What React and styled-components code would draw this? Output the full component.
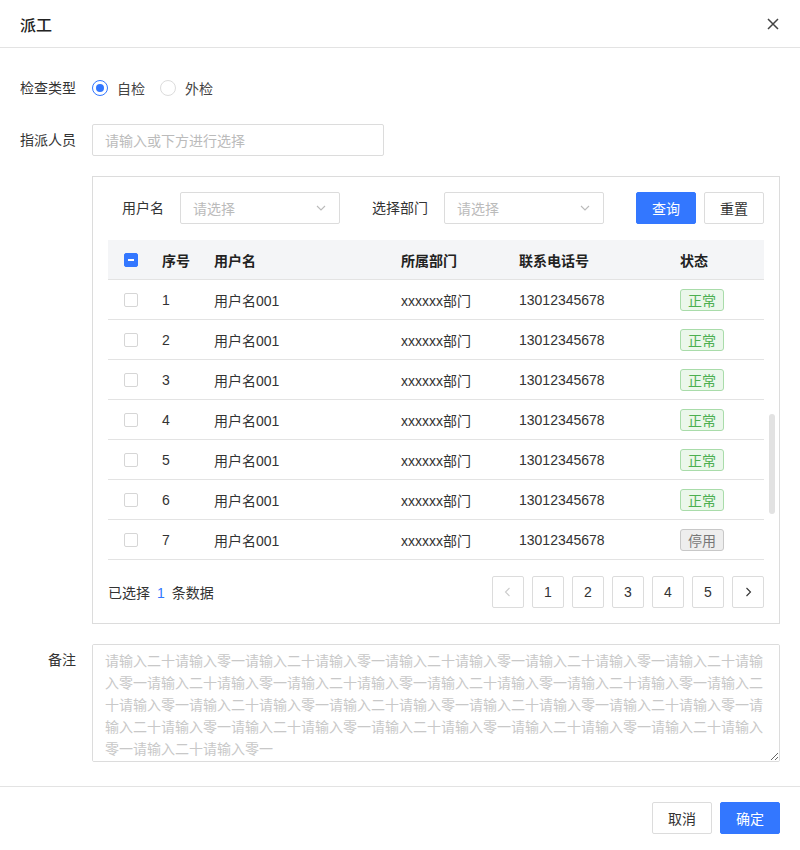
import React from "react";
import styled, { createGlobalStyle } from "styled-components";

const BLUE = "#3377ff";

const GlobalStyle = createGlobalStyle`
  * { box-sizing: border-box; }
  body {
    margin: 0;
    background: #fff;
    font-family: "Liberation Sans", "Noto Sans CJK SC", sans-serif;
    font-size: 14px;
    color: #333;
  }
`;

const Dialog = styled.div`
  width: 800px;
  height: 850px;
  display: flex;
  flex-direction: column;
  background: #fff;
`;

const Header = styled.div`
  height: 48px;
  display: flex;
  align-items: center;
  justify-content: space-between;
  padding: 0 20px;
  border-bottom: 1px solid #e3e3e3;
`;

const Title = styled.div`
  font-size: 16px;
  font-weight: 500;
  color: #222;
`;

const CloseBtn = styled.button`
  border: 0;
  background: none;
  padding: 0;
  display: flex;
  color: #444;
  cursor: pointer;
`;

const Body = styled.div`
  padding: 24px 20px 24px 20px;
  display: flex;
  flex-direction: column;
  gap: 20px;
  border-bottom: 1px solid #e3e3e3;
`;

const FormRow = styled.div`
  display: flex;
  align-items: ${({ top }) => (top ? "flex-start" : "center")};
  gap: 16px;
  min-height: 32px;
`;

const Label = styled.div`
  width: 56px;
  flex: none;
  text-align: right;
  white-space: nowrap;
  line-height: 32px;
  color: #333;
`;

const Spacer = styled.div`
  width: 56px;
  flex: none;
`;

const RadioGroup = styled.div`
  display: flex;
  align-items: center;
  gap: 15px;
`;

const RadioItem = styled.label`
  display: flex;
  align-items: center;
  gap: 9px;
  color: #444;
`;

const RadioDot = styled.span`
  width: 16px;
  height: 16px;
  border-radius: 50%;
  border: 1px solid ${({ checked }) => (checked ? BLUE : "#dcdcdc")};
  display: flex;
  align-items: center;
  justify-content: center;
  &::after {
    content: "";
    width: 8px;
    height: 8px;
    border-radius: 50%;
    background: ${({ checked }) => (checked ? BLUE : "transparent")};
  }
`;

const TextInput = styled.div`
  width: ${({ w }) => w}px;
  height: 32px;
  border: 1px solid #dcdcdc;
  border-radius: 2px;
  padding: 0 12px;
  display: flex;
  align-items: center;
  justify-content: space-between;
  color: #bbb;
  flex: none;
`;

const Panel = styled.div`
  position: relative;
  flex: 1;
  border: 1px solid #dcdcdc;
  padding: 15px;
  display: flex;
  flex-direction: column;
  gap: 16px;
`;

const FilterRow = styled.div`
  display: flex;
  align-items: center;
`;

const FilterGroup = styled.div`
  display: flex;
  align-items: center;
  gap: 16px;
  margin-right: 32px;
`;

const Button = styled.button`
  width: 60px;
  height: 32px;
  border-radius: 2px;
  font-family: inherit;
  font-size: 14px;
  border: 1px solid ${({ primary }) => (primary ? BLUE : "#dcdcdc")};
  background: ${({ primary }) => (primary ? BLUE : "#fff")};
  color: ${({ primary }) => (primary ? "#fff" : "#333")};
  cursor: pointer;
  & + & {
    margin-left: 8px;
  }
`;

const Table = styled.div`
  display: flex;
  flex-direction: column;
`;

const TRow = styled.div`
  display: grid;
  grid-template-columns: 54px 52px 187px 118px 161px 1fr;
  height: 40px;
  align-items: center;
  border-bottom: 1px solid #e3e3e3;
  background: ${({ head }) => (head ? "#f4f5f7" : "#fff")};
  font-weight: ${({ head }) => (head ? 600 : 400)};
  color: ${({ head }) => (head ? "#222" : "#333")};
`;

const Cell = styled.div`
  padding-left: ${({ pl }) => pl || 0}px;
  white-space: nowrap;
  display: flex;
  align-items: center;
`;

const CheckBox = styled.span`
  width: 14px;
  height: 14px;
  border-radius: 2px;
  border: 1px solid ${({ on }) => (on ? BLUE : "#d6d6d6")};
  background: ${({ on }) => (on ? BLUE : "#fff")};
  display: flex;
  align-items: center;
  justify-content: center;
  &::after {
    content: "";
    width: 6px;
    height: 2px;
    background: ${({ on }) => (on ? "#fff" : "transparent")};
  }
`;

const Tag = styled.span`
  width: 44px;
  height: 22px;
  border-radius: 3px;
  display: flex;
  align-items: center;
  justify-content: center;
  font-size: 14px;
  border: 1px solid ${({ off }) => (off ? "#c8c8c8" : "#a9dcaa")};
  background: ${({ off }) => (off ? "#eeeeee" : "#ebf7eb")};
  color: ${({ off }) => (off ? "#777" : "#4caf50")};
`;

const PanelFooter = styled.div`
  display: flex;
  align-items: center;
  justify-content: space-between;
`;

const Selected = styled.div`
  color: #333;
  span {
    color: ${BLUE};
    margin: 0 7px;
  }
`;

const Pager = styled.div`
  display: flex;
  gap: 8px;
`;

const PageBtn = styled.button`
  width: 32px;
  height: 32px;
  border: 1px solid #dcdcdc;
  border-radius: 2px;
  background: #fff;
  font-family: inherit;
  font-size: 14px;
  color: ${({ disabled }) => (disabled ? "#ccc" : "#333")};
  display: flex;
  align-items: center;
  justify-content: center;
  padding: 0;
`;

const ScrollThumb = styled.div`
  position: absolute;
  left: 676px;
  top: 237px;
  width: 6px;
  height: 100px;
  border-radius: 3px;
  background: #e2e2e2;
`;

const TextArea = styled.textarea`
  flex: 1;
  height: 118px;
  border: 1px solid #dcdcdc;
  border-radius: 2px;
  padding: 5px 12px;
  font-family: inherit;
  font-size: 14px;
  line-height: 22px;
  color: #333;
  resize: vertical;
  outline: none;
  &::placeholder {
    color: #c8c8c8;
  }
`;

const Footer = styled.div`
  display: flex;
  justify-content: flex-end;
  padding: 15px 20px 0 20px;
`;

const Chevron = ({ dir = "down", color = "#bbb" }) => {
  const d = {
    down: "M2 4l4 4 4-4",
    left: "M7.5 2l-4 4 4 4",
    right: "M4.5 2l4 4-4 4",
  }[dir];
  return (
    <svg width="12" height="12" viewBox="0 0 12 12" fill="none">
      <path d={d} stroke={color} strokeWidth="1.1" />
    </svg>
  );
};

const rows = [1, 2, 3, 4, 5, 6, 7].map((n) => ({
  id: n,
  name: "用户名001",
  dept: "xxxxxx部门",
  phone: "13012345678",
  off: n === 7,
}));

const placeholder = "请输入二十请输入零一".repeat(20);

export default function App() {
  return (
    <Dialog>
      <GlobalStyle />
      <Header>
        <Title>派工</Title>
        <CloseBtn>
          <svg width="14" height="14" viewBox="0 0 14 14">
            <path d="M2 2l10 10M12 2L2 12" stroke="#444" strokeWidth="1.5" />
          </svg>
        </CloseBtn>
      </Header>
      <Body>
        <FormRow>
          <Label>检查类型</Label>
          <RadioGroup>
            <RadioItem>
              <RadioDot checked />
              自检
            </RadioItem>
            <RadioItem>
              <RadioDot />
              外检
            </RadioItem>
          </RadioGroup>
        </FormRow>
        <FormRow>
          <Label>指派人员</Label>
          <TextInput w={292}>请输入或下方进行选择</TextInput>
        </FormRow>
        <FormRow>
          <Spacer />
          <Panel>
            <FilterRow>
              <FilterGroup>
                <Label>用户名</Label>
                <TextInput w={160}>
                  请选择
                  <Chevron />
                </TextInput>
              </FilterGroup>
              <FilterGroup>
                <Label>选择部门</Label>
                <TextInput w={160}>
                  请选择
                  <Chevron />
                </TextInput>
              </FilterGroup>
              <Button primary>查询</Button>
              <Button>重置</Button>
            </FilterRow>
            <Table>
              <TRow head>
                <Cell pl={16}>
                  <CheckBox on />
                </Cell>
                <Cell>序号</Cell>
                <Cell>用户名</Cell>
                <Cell>所属部门</Cell>
                <Cell>联系电话号</Cell>
                <Cell>状态</Cell>
              </TRow>
              {rows.map((r) => (
                <TRow key={r.id}>
                  <Cell pl={16}>
                    <CheckBox />
                  </Cell>
                  <Cell>{r.id}</Cell>
                  <Cell>{r.name}</Cell>
                  <Cell>{r.dept}</Cell>
                  <Cell>{r.phone}</Cell>
                  <Cell>
                    <Tag off={r.off}>{r.off ? "停用" : "正常"}</Tag>
                  </Cell>
                </TRow>
              ))}
            </Table>
            <PanelFooter>
              <Selected>
                已选择<span>1</span>条数据
              </Selected>
              <Pager>
                <PageBtn disabled>
                  <Chevron dir="left" color="#ccc" />
                </PageBtn>
                {[1, 2, 3, 4, 5].map((p) => (
                  <PageBtn key={p}>{p}</PageBtn>
                ))}
                <PageBtn>
                  <Chevron dir="right" color="#333" />
                </PageBtn>
              </Pager>
            </PanelFooter>
            <ScrollThumb />
          </Panel>
        </FormRow>
        <FormRow top>
          <Label>备注</Label>
          <TextArea placeholder={placeholder} />
        </FormRow>
      </Body>
      <Footer>
        <Button>取消</Button>
        <Button primary>确定</Button>
      </Footer>
    </Dialog>
  );
}
